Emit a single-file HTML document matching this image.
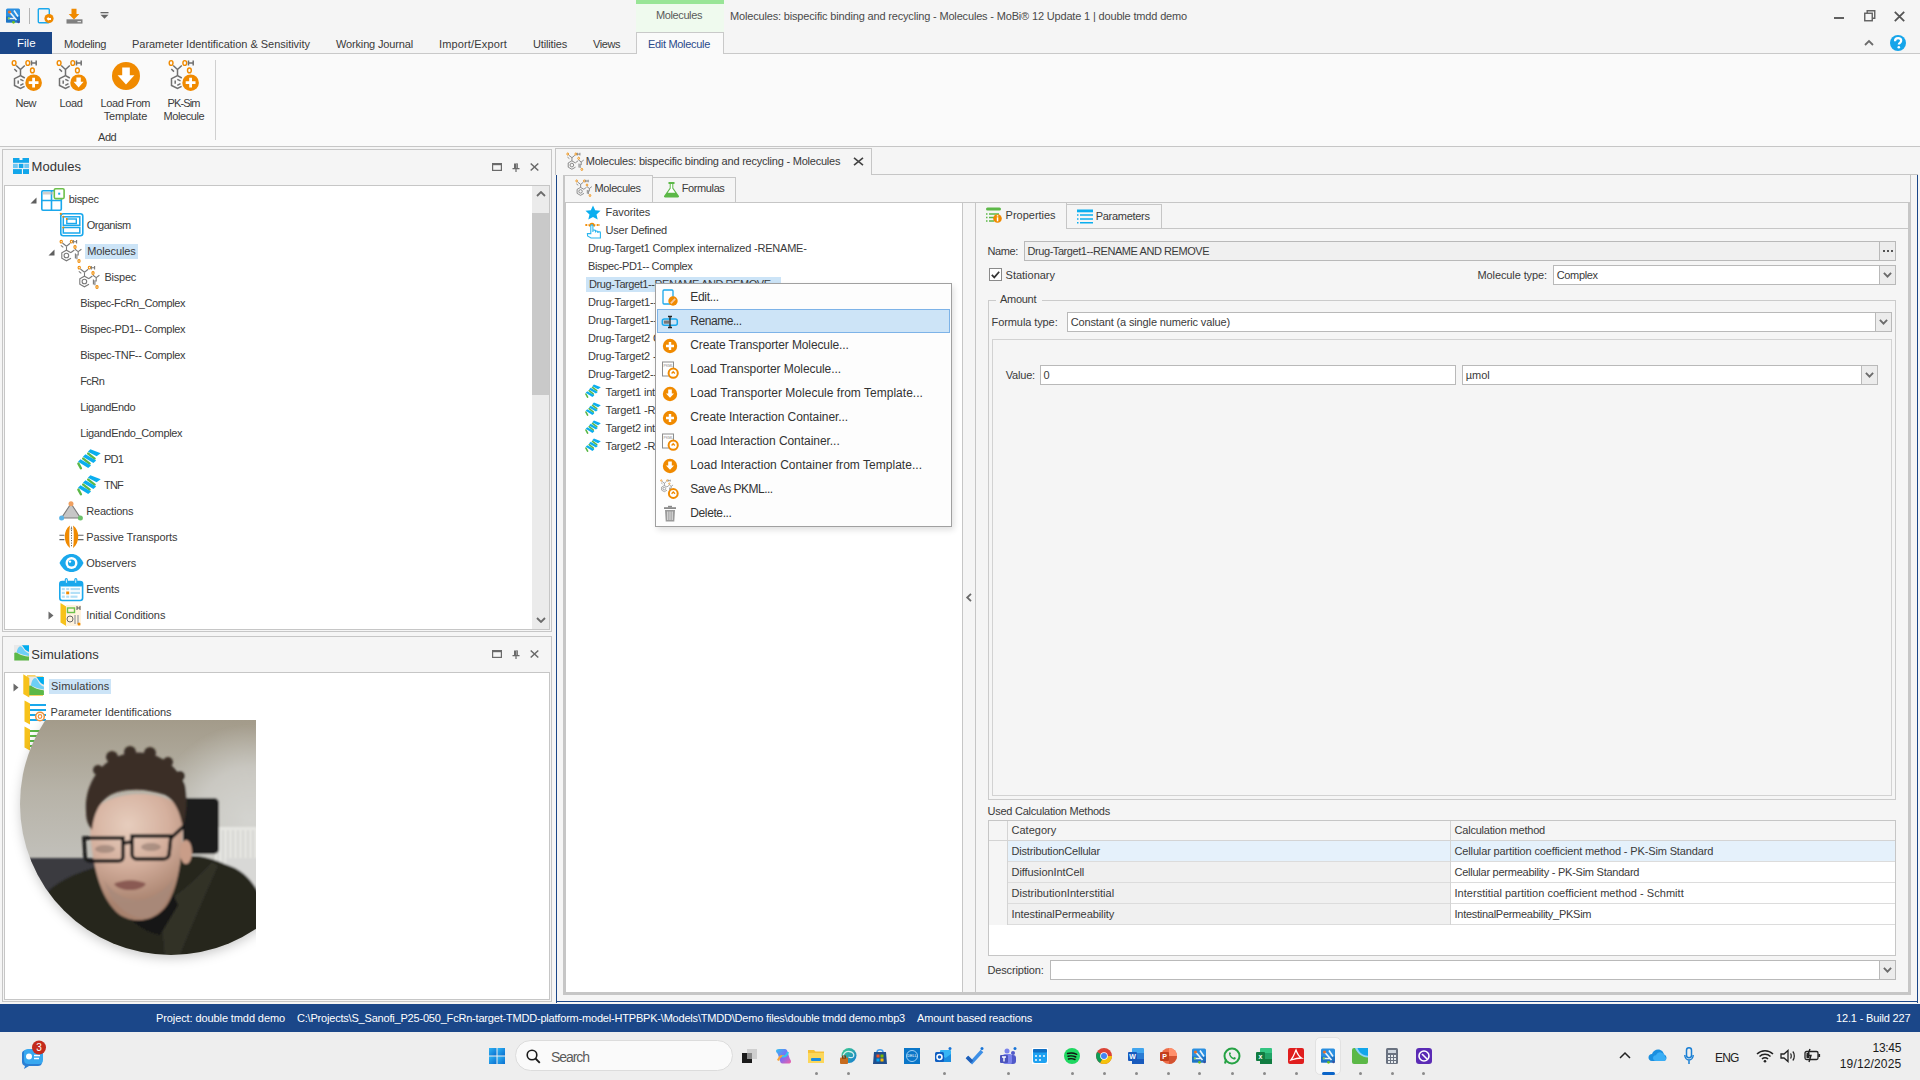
<!DOCTYPE html>
<html><head><meta charset="utf-8">
<style>
*{box-sizing:border-box;margin:0;padding:0}
html,body{width:1920px;height:1080px;overflow:hidden;background:#f5f5f5;font-family:"Liberation Sans",sans-serif;color:#3a3a3a;position:relative}
.a{position:absolute}
.t{position:absolute;white-space:nowrap;line-height:1}
svg{position:absolute;overflow:visible}
</style></head><body>
<svg width="0" height="0" style="position:absolute"><defs>
<symbol id="molbase" viewBox="0 0 40 40">
 <g fill="none" stroke="#f08a00" stroke-width="1.4"><ellipse cx="6.1" cy="7" rx="1.9" ry="2.4"/><ellipse cx="19.8" cy="7" rx="1.9" ry="2.4"/><ellipse cx="24.4" cy="14.4" rx="1.9" ry="2.4"/></g>
 <g fill="none" stroke="#707070" stroke-width="1.5"><path d="M23.5 4.5V9.6M28.2 4.5V9.6M23.5 7H28.2"/><path d="M8.2 9.5L12.5 13.5L16.8 9.5M12.5 13.5V19.5M6.3 13L9 15.6"/><path d="M16.8 22L12.5 19.5L6.5 22.6V29.5L12.5 32.5L16.6 30.3M10.2 24.5V27.8M12.3 23.3L15.5 24.9M12.3 29.3L15.5 27.6"/></g>
</symbol>
<symbol id="molplus" viewBox="0 0 40 40"><use href="#molbase"/><circle cx="25.6" cy="26.7" r="8.3" fill="#f08a00"/><path d="M25.6 21.8V31.6M20.7 26.7H30.5" stroke="#fff" stroke-width="2.8"/></symbol>
<symbol id="moldown" viewBox="0 0 40 40"><use href="#molbase"/><circle cx="25.6" cy="26.7" r="8.3" fill="#f08a00"/><path d="M23.4 21.5H27.8V25.8H30.6L25.6 31.4L20.6 25.8H23.4Z" fill="#fff"/></symbol>
<symbol id="molsmall" viewBox="0 0 24 24">
 <g fill="none" stroke="#f08a00" stroke-width="1.1"><ellipse cx="2.2" cy="2.6" rx="1.1" ry="1.4"/><ellipse cx="12.4" cy="2.6" rx="1.1" ry="1.4"/><ellipse cx="16" cy="8" rx="1.1" ry="1.4"/><ellipse cx="20" cy="22" rx="1.1" ry="1.4"/></g>
 <g fill="none" stroke="#7a7a7a" stroke-width="1.1"><path d="M14.3 1V4.4M17.6 1V4.4M14.3 2.7H17.6"/><path d="M3.4 4L7.5 7.2L11.2 4.2M7.5 7.2V11.2M1.8 6.4L4.3 8.4"/><path d="M12 13.85L7.4 11.2L2.8 13.85V19.15L7.4 21.8L12 19.15"/><circle cx="7.4" cy="16.5" r="2.3"/><path d="M12 13.5L15.4 11M16 10.2L19.2 12.6L22.4 10.2M19.2 12.6V16.5M16.4 14.6V19.6M17.9 15.2V20.2"/></g>
</symbol>
<symbol id="helix" viewBox="0 0 30 30">
 <g stroke="#5cb847" stroke-width="2.4" stroke-linecap="round"><path d="M14.2 9.6L20.6 14.6"/><path d="M9.2 14.6L15.6 19.6"/><path d="M4.4 19.6L6.9 24.3"/></g>
 <g fill="#0aaeef"><path d="M13.9 7.8L16.4 5.3L26.7 9.2L22.6 12.2Z"/><path d="M8.9 12.8L11.5 10.2L22.2 16.4L19.4 18.9Z"/><path d="M4 17.7L6.5 15.2L17.1 21.4L14.2 24Z"/></g>
</symbol>
<symbol id="chev" viewBox="0 0 10 6"><path d="M1 1L5 5L9 1" fill="none" stroke="#6b6b6b" stroke-width="1.8"/></symbol>
</defs></svg>
<div class="a" style="left:0px;top:0px;width:1920px;height:32px;background:#f5f5f5"></div>
<svg style="left:4px;top:7px" width="18" height="18" viewBox="0 0 18 18"><rect x="2" y="1.5" width="14" height="14" rx="1.5" fill="#2b8fe0"/><rect x="2" y="9.5" width="14" height="6" fill="#1f74c4"/><path d="M5.5 5L12.5 13M10 3.5L14 9.5M4 11.5H11" stroke="#fff" stroke-width="1.6" opacity="0.9"/><circle cx="5.5" cy="5" r="1.6" fill="#e8702a"/><circle cx="4.8" cy="11.3" r="1.1" fill="#8dd04a"/><circle cx="9.5" cy="15.3" r="1.4" fill="#6cc020"/><circle cx="14.5" cy="15" r="1.2" fill="#3a4fa0"/></svg>
<div class="a" style="left:29px;top:8px;width:1px;height:16px;background:#b4b4b4"></div>
<svg style="left:37px;top:8px" width="17" height="16" viewBox="0 0 17 16"><rect x="1.3" y="0.8" width="11" height="14" rx="1" fill="none" stroke="#1ba8ec" stroke-width="1.4"/><circle cx="12" cy="10.5" r="4.6" fill="#f08a00"/><path d="M9.6 10.8L11.6 8.8V10H14V12H11.6V13Z" fill="#fff"/></svg>
<svg style="left:66px;top:8px" width="17" height="16" viewBox="0 0 17 16"><path d="M5.5 0.8H10.5V6H13.3L8 11.5L2.7 6H5.5Z" fill="#f08a00"/><rect x="0.5" y="11.3" width="16" height="4.3" fill="#808080"/><rect x="11.5" y="13" width="3.5" height="1.2" fill="#ddd"/></svg>
<svg style="left:100px;top:12px" width="9" height="7" viewBox="0 0 9 7"><rect x="0.5" y="0" width="8" height="1.3" fill="#666"/><path d="M0.5 2.8H8.5L4.5 6.8Z" fill="#666"/></svg>
<div class="a" style="left:636px;top:0px;width:88px;height:32px;background:#effaee"></div>
<div class="a" style="left:636px;top:0px;width:88px;height:4px;background:#99e597"></div>
<div class="t" style="left:656px;top:10px;font-size:11px;letter-spacing:-0.392px;color:#5a5a5a">Molecules</div>
<div class="t" style="left:730px;top:11px;font-size:11px;letter-spacing:-0.166px;color:#4a4a4a">Molecules: bispecific binding and recycling - Molecules - MoBi® 12 Update 1 | double tmdd demo</div>
<div class="a" style="left:1834px;top:17px;width:10px;height:1.5px;background:#606060"></div>
<svg style="left:1864px;top:10px" width="12" height="12" viewBox="0 0 12 12"><rect x="0.75" y="3.25" width="7.5" height="7.5" fill="none" stroke="#606060" stroke-width="1.4"/><path d="M3.2 3.2V0.75H10.75V8.3H8.3" fill="none" stroke="#606060" stroke-width="1.4"/></svg>
<svg style="left:1894px;top:11px" width="11" height="11" viewBox="0 0 11 11"><path d="M0.8 0.8L10.2 10.2M10.2 0.8L0.8 10.2" stroke="#555" stroke-width="1.8"/></svg>
<div class="a" style="left:0px;top:53px;width:1920px;height:1px;background:#c9c9c9"></div>
<div class="a" style="left:0px;top:32px;width:52px;height:22px;background:#1b4789"></div>
<div class="t" style="left:17px;top:38px;font-size:11.5px;letter-spacing:0px;color:#ffffff">File</div>
<div class="t" style="left:64px;top:39px;font-size:11px;letter-spacing:-0.33px">Modeling</div>
<div class="t" style="left:132px;top:39px;font-size:11px;letter-spacing:-0.03px">Parameter Identification &amp; Sensitivity</div>
<div class="t" style="left:336px;top:39px;font-size:11px;letter-spacing:-0.152px">Working Journal</div>
<div class="t" style="left:439px;top:39px;font-size:11px;letter-spacing:0.151px">Import/Export</div>
<div class="t" style="left:533px;top:39px;font-size:11px;letter-spacing:-0.161px">Utilities</div>
<div class="t" style="left:593px;top:39px;font-size:11px;letter-spacing:-0.431px">Views</div>
<div class="a" style="left:636px;top:32px;width:88px;height:22px;background:#fafafa;border:1px solid #c9c9c9;border-bottom:none"></div>
<div class="t" style="left:648px;top:39px;font-size:11px;letter-spacing:-0.311px;color:#2b4a8b">Edit Molecule</div>
<svg style="left:1864px;top:39px" width="10" height="7" viewBox="0 0 10 7"><path d="M1 6L5 2L9 6" fill="none" stroke="#6b6b6b" stroke-width="1.8"/></svg>
<svg style="left:1889px;top:34px" width="18" height="18" viewBox="0 0 18 18"><circle cx="9" cy="9" r="8" fill="#16a5ea"/><path d="M6 7.2C6 5.2 7.4 4.2 9.1 4.2C10.9 4.2 12.2 5.3 12.2 6.8C12.2 8.7 9.8 8.9 9.8 10.6" fill="none" stroke="#fff" stroke-width="2.2"/><circle cx="9.8" cy="13.3" r="1.3" fill="#fff"/></svg>
<div class="a" style="left:0px;top:54px;width:1920px;height:92px;background:#fafafa"></div>
<div class="a" style="left:0px;top:146px;width:1920px;height:1px;background:#c6c6c6"></div>
<svg style="left:8px;top:56px" width="40" height="40" viewBox="0 0 40 40"><use href="#molplus"/></svg>
<svg style="left:53px;top:56px" width="40" height="40" viewBox="0 0 40 40"><use href="#moldown"/></svg>
<svg style="left:111px;top:61px" width="30" height="30" viewBox="0 0 30 30"><circle cx="15" cy="15" r="14" fill="#f08a00"/><path d="M11.2 6.5H18.8V14.3H23.4L15 23.5L6.6 14.3H11.2Z" fill="#fff"/></svg>
<svg style="left:165px;top:56px" width="40" height="40" viewBox="0 0 40 40"><use href="#molplus"/></svg>
<div class="t" style="left:15.5px;top:98px;font-size:11px;letter-spacing:-0.505px">New</div>
<div class="t" style="left:59.4px;top:98px;font-size:11px;letter-spacing:-0.371px">Load</div>
<div class="t" style="left:100.6px;top:98px;font-size:11px;letter-spacing:-0.411px">Load From</div>
<div class="t" style="left:103.7px;top:111px;font-size:11px;letter-spacing:-0.143px">Template</div>
<div class="t" style="left:167.5px;top:98px;font-size:11px;letter-spacing:-0.88px">PK-Sim</div>
<div class="t" style="left:163.6px;top:111px;font-size:11px;letter-spacing:-0.429px">Molecule</div>
<div class="t" style="left:98px;top:132px;font-size:11px;letter-spacing:-0.426px">Add</div>
<div class="a" style="left:215px;top:60px;width:1px;height:80px;background:#d0d0d0"></div>
<div class="a" style="left:2px;top:149px;width:550px;height:483px;background:#f5f5f5;border:1px solid #c6c6c6"></div>
<svg style="left:13px;top:158px" width="17" height="16" viewBox="0 0 17 16"><rect x="0" y="0" width="16" height="4.8" fill="#12a6ea"/><rect x="6.5" y="0" width="3" height="2" fill="#f5f5f5"/><rect x="0" y="5.8" width="4.8" height="4.3" fill="#6fc7f3"/><rect x="5.8" y="5.8" width="4.6" height="4.3" fill="#12a6ea"/><rect x="11.3" y="5.8" width="4.7" height="4.3" fill="#6fc7f3"/><rect x="0" y="11.1" width="8.9" height="4.9" fill="#12a6ea"/><rect x="10" y="11.1" width="6" height="4.9" fill="#12a6ea"/></svg>
<div class="t" style="left:31.6px;top:160px;font-size:13px;letter-spacing:0.037px;color:#333">Modules</div>
<svg style="left:492px;top:163px" width="10" height="8" viewBox="0 0 10 8"><rect x="0.6" y="0.6" width="8.8" height="6.8" fill="none" stroke="#6a6a6a" stroke-width="1.2"/><rect x="0" y="0" width="10" height="2.2" fill="#6a6a6a"/></svg>
<svg style="left:512px;top:163px" width="8" height="9" viewBox="0 0 8 9"><path d="M2 0.5H6V5H7.5V6.2H4.6V9H3.4V6.2H0.5V5H2Z" fill="#6a6a6a"/><rect x="4" y="0.5" width="1.4" height="4.5" fill="#9a9a9a"/></svg>
<svg style="left:530px;top:163px" width="9" height="8" viewBox="0 0 9 8"><path d="M0.7 0.5L8.3 7.5M8.3 0.5L0.7 7.5" stroke="#6a6a6a" stroke-width="1.5"/></svg>
<div class="a" style="left:4px;top:185px;width:546px;height:445px;background:#ffffff;border:1px solid #c6c6c6"></div>
<div class="a" style="left:532px;top:186px;width:17px;height:443px;background:#ebebeb"></div>
<div class="a" style="left:532px;top:213px;width:17px;height:182px;background:#c9c9c9"></div>
<svg style="left:536px;top:191px" width="10" height="6" viewBox="0 0 10 6"><use href="#chev" transform="rotate(180 5 3)"/></svg>
<svg style="left:536px;top:617px" width="10" height="6" viewBox="0 0 10 6"><use href="#chev"/></svg>
<svg style="left:30px;top:197px" width="7" height="7" viewBox="0 0 7 7"><path d="M6.5 0.5V6.5H0.5Z" fill="#5f5f5f"/></svg>
<svg style="left:41px;top:188px" width="24" height="23" viewBox="0 0 24 23"><rect x="0.8" y="2.8" width="19.5" height="19.5" rx="1.2" fill="none" stroke="#1aa8ec" stroke-width="1.6"/><path d="M10.5 3V22M1 12.5H20" stroke="#1aa8ec" stroke-width="1.6"/><rect x="13.3" y="0.8" width="9.8" height="9.8" rx="1.3" fill="#fff" stroke="#6cc04a" stroke-width="1.6"/><rect x="17.2" y="4.7" width="2" height="2" fill="#1aa8ec"/><rect x="2" y="4" width="10" height="2.5" fill="#bbb" opacity="0.7"/></svg>
<div class="t" style="left:68.7px;top:194px;font-size:11px;letter-spacing:-0.299px">bispec</div>
<svg style="left:60px;top:213px" width="24" height="24" viewBox="0 0 24 24"><rect x="0.8" y="0.8" width="22" height="22" rx="2.5" fill="none" stroke="#1aa8ec" stroke-width="1.6"/><rect x="3.3" y="3.8" width="16.5" height="8.5" fill="none" stroke="#1aa8ec" stroke-width="1.5"/><rect x="6.8" y="6" width="9.5" height="4.5" fill="none" stroke="#1aa8ec" stroke-width="1.4"/><rect x="3.3" y="14.5" width="16.5" height="5.5" fill="none" stroke="#1aa8ec" stroke-width="1.5"/><circle cx="0.8" cy="0.8" r="1.1" fill="#f08a00"/><circle cx="3.3" cy="3.8" r="1" fill="#f08a00"/><circle cx="6.8" cy="6" r="1" fill="#f08a00"/><circle cx="3.3" cy="14.5" r="1" fill="#f08a00"/></svg>
<div class="t" style="left:86.7px;top:220px;font-size:11px;letter-spacing:-0.461px">Organism</div>
<svg style="left:48px;top:249px" width="7" height="7" viewBox="0 0 7 7"><path d="M6.5 0.5V6.5H0.5Z" fill="#5f5f5f"/></svg>
<svg style="left:59px;top:239px" width="24" height="24" viewBox="0 0 24 24"><use href="#molsmall"/></svg>
<div class="a" style="left:85px;top:244px;width:53px;height:15px;background:#cce4f7"></div>
<div class="t" style="left:87.2px;top:246px;font-size:11px;letter-spacing:-0.115px">Molecules</div>
<svg style="left:77px;top:265px" width="24" height="24" viewBox="0 0 24 24"><use href="#molsmall"/></svg>
<div class="t" style="left:104.5px;top:272px;font-size:11px;letter-spacing:-0.255px">Bispec</div>
<div class="t" style="left:80.2px;top:298px;font-size:11px;letter-spacing:-0.394px">Bispec-FcRn_Complex</div>
<div class="t" style="left:80.2px;top:324px;font-size:11px;letter-spacing:-0.344px">Bispec-PD1-- Complex</div>
<div class="t" style="left:80.2px;top:350px;font-size:11px;letter-spacing:-0.343px">Bispec-TNF-- Complex</div>
<div class="t" style="left:80.2px;top:376px;font-size:11px;letter-spacing:-0.57px">FcRn</div>
<div class="t" style="left:80.2px;top:402px;font-size:11px;letter-spacing:-0.373px">LigandEndo</div>
<div class="t" style="left:80.2px;top:428px;font-size:11px;letter-spacing:-0.347px">LigandEndo_Complex</div>
<svg style="left:74px;top:444px" width="30" height="30" viewBox="0 0 30 30"><use href="#helix"/></svg>
<div class="t" style="left:104px;top:454px;font-size:11px;letter-spacing:-0.802px">PD1</div>
<svg style="left:74px;top:470px" width="30" height="30" viewBox="0 0 30 30"><use href="#helix"/></svg>
<div class="t" style="left:104px;top:480px;font-size:11px;letter-spacing:-0.797px">TNF</div>
<svg style="left:59px;top:501px" width="24" height="20" viewBox="0 0 24 20"><path d="M12 2.5L21.5 17H2.5Z" fill="#c6c6c6" stroke="#7a7a7a" stroke-width="1.1"/><circle cx="12" cy="2.8" r="2.5" fill="#f0a060"/><circle cx="2.6" cy="17" r="2.5" fill="#5ab4e8"/><circle cx="21.4" cy="17" r="2.5" fill="#6cc06a"/></svg>
<div class="t" style="left:86.3px;top:506px;font-size:11px;letter-spacing:-0.214px">Reactions</div>
<svg style="left:59px;top:524px" width="25" height="25" viewBox="0 0 25 25"><path d="M11 1.5C4 6 4 19 11 24C10 18 10 7 11 1.5Z" fill="#f08a00"/><path d="M14 1.5C21 6 21 19 14 24C15 18 15 7 14 1.5Z" fill="#f08a00"/><path d="M12.5 6V23.5" stroke="#555" stroke-width="0.9" stroke-dasharray="1.2 1.3"/><path d="M11.6 5.5L12.5 1.8L13.4 5.5Z" fill="#777"/><path d="M0.4 11.2H5.4M0.4 15.6H5.4M19 11.2H24.5M19 15.6H24.5" stroke="#666" stroke-width="1.1"/></svg>
<div class="t" style="left:86.3px;top:532px;font-size:11px;letter-spacing:-0.141px">Passive Transports</div>
<svg style="left:59px;top:553px" width="25" height="20" viewBox="0 0 25 20"><path d="M0.5 10C4 3 8 1 12.5 1S21 3 24.5 10C21 17 17 19 12.5 19S4 17 0.5 10Z" fill="#1aa8ec"/><circle cx="12.5" cy="10" r="6" fill="#fff"/><circle cx="12.5" cy="10" r="3.6" fill="#1aa8ec"/><circle cx="11" cy="8.6" r="1.2" fill="#fff"/></svg>
<div class="t" style="left:86.3px;top:558px;font-size:11px;letter-spacing:-0.083px">Observers</div>
<svg style="left:59px;top:578px" width="25" height="24" viewBox="0 0 25 24"><rect x="0.8" y="3.5" width="22.8" height="19" rx="2.5" fill="#fff" stroke="#1aa8ec" stroke-width="1.6"/><rect x="0.8" y="3.5" width="22.8" height="5" rx="1.5" fill="#1aa8ec"/><rect x="6.3" y="0.6" width="2" height="5" rx="1" fill="#fff" stroke="#1aa8ec" stroke-width="1.1"/><rect x="15.8" y="0.6" width="2" height="5" rx="1" fill="#fff" stroke="#1aa8ec" stroke-width="1.1"/><g fill="#b3e0f7"><rect x="2.8" y="10" width="3" height="2.2"/><rect x="7.2" y="10" width="3" height="2.2"/><rect x="11.5" y="10" width="9.5" height="2.2"/><rect x="2.8" y="13.8" width="3" height="2.2"/><rect x="11.5" y="13.8" width="9.5" height="2.2"/><rect x="2.8" y="17.6" width="3" height="2.2"/><rect x="7.2" y="17.6" width="3" height="2.2"/><rect x="11.5" y="17.6" width="7" height="2.2"/></g><rect x="7.2" y="13.5" width="3" height="2.8" fill="#f08a00"/></svg>
<div class="t" style="left:86.3px;top:584px;font-size:11px;letter-spacing:-0.107px">Events</div>
<svg style="left:48px;top:611px" width="6" height="9" viewBox="0 0 6 9"><path d="M0.5 0.5L5.5 4.5L0.5 8.5Z" fill="#6a6a6a"/></svg>
<svg style="left:60px;top:602px" width="22" height="25" viewBox="0 0 22 25"><path d="M0.5 1L7 5V24.5L0.5 20.5Z" fill="#f7c21b"/><rect x="6" y="3" width="15" height="21" fill="#fff3de"/><rect x="7.5" y="6" width="7" height="4.5" fill="none" stroke="#6cc04a" stroke-width="1.4"/><circle cx="10" cy="17" r="3" fill="none" stroke="#666" stroke-width="1"/><path d="M15 13V22M18 13V22" stroke="#aaa" stroke-width="1.5"/><circle cx="19" cy="22" r="1.5" fill="#f08a00"/><path d="M17 4V8M20 4V8M17 6H20" stroke="#555" stroke-width="1"/></svg>
<div class="t" style="left:86.3px;top:610px;font-size:11px;letter-spacing:-0.095px">Initial Conditions</div>
<div class="a" style="left:2px;top:636px;width:550px;height:366px;background:#f5f5f5;border:1px solid #c6c6c6"></div>
<svg style="left:13.7px;top:645.3px" width="15" height="16" viewBox="0 0 15 16"><rect x="0" y="0" width="15" height="15.5" fill="#e9e9e9"/><path d="M0.3 15.5V8C2 6.2 4 8.8 8 10.3C10.5 11.1 13 11.4 15 11.6V15.5Z" fill="#5cb847"/><path d="M2.6 7.6C3 4 4.5 1.5 6.5 1.2C8 1.2 9 3.5 10.5 5.5C12 7 13.5 8 15 8.4V10.9C12 10.5 8 9.8 5.5 8.6C4.5 8.2 3.5 8 2.6 7.6Z" fill="#6dcff6"/><path d="M7.6 0.2H15V6.9C13 6.3 11.5 5.2 10.3 3.5C9.5 2.2 8.8 0.8 7.6 0.2Z" fill="#00adef"/></svg>
<div class="t" style="left:31.3px;top:648px;font-size:13px;letter-spacing:0.036px;color:#333">Simulations</div>
<svg style="left:492px;top:650px" width="10" height="8" viewBox="0 0 10 8"><rect x="0.6" y="0.6" width="8.8" height="6.8" fill="none" stroke="#6a6a6a" stroke-width="1.2"/><rect x="0" y="0" width="10" height="2.2" fill="#6a6a6a"/></svg>
<svg style="left:512px;top:650px" width="8" height="9" viewBox="0 0 8 9"><path d="M2 0.5H6V5H7.5V6.2H4.6V9H3.4V6.2H0.5V5H2Z" fill="#6a6a6a"/><rect x="4" y="0.5" width="1.4" height="4.5" fill="#9a9a9a"/></svg>
<svg style="left:530px;top:650px" width="9" height="8" viewBox="0 0 9 8"><path d="M0.7 0.5L8.3 7.5M8.3 0.5L0.7 7.5" stroke="#6a6a6a" stroke-width="1.5"/></svg>
<div class="a" style="left:4px;top:672px;width:546px;height:328px;background:#ffffff;border:1px solid #c6c6c6"></div>
<svg style="left:12.5px;top:683px" width="6" height="9" viewBox="0 0 6 9"><path d="M0.5 0.5L5.5 4.5L0.5 8.5Z" fill="#6a6a6a"/></svg>
<svg style="left:23px;top:674px" width="22" height="24" viewBox="0 0 22 24"><path d="M4 1H12L13 2H20V22H4Z" fill="#f7d36b"/><g transform="translate(5.3,2.7) scale(1.04,1.18)"><rect x="0" y="0" width="15" height="15.5" fill="#e9e9e9"/><path d="M0.3 15.5V8C2 6.2 4 8.8 8 10.3C10.5 11.1 13 11.4 15 11.6V15.5Z" fill="#5cb847"/><path d="M2.6 7.6C3 4 4.5 1.5 6.5 1.2C8 1.2 9 3.5 10.5 5.5C12 7 13.5 8 15 8.4V10.9C12 10.5 8 9.8 5.5 8.6C4.5 8.2 3.5 8 2.6 7.6Z" fill="#6dcff6"/><path d="M7.6 0.2H15V6.9C13 6.3 11.5 5.2 10.3 3.5C9.5 2.2 8.8 0.8 7.6 0.2Z" fill="#00adef"/></g><path d="M0.3 0.3L6.3 4V23.5L0.3 20Z" fill="#f7c21b"/></svg>
<div class="a" style="left:49px;top:679px;width:62px;height:15px;background:#cce4f7"></div>
<div class="t" style="left:51.1px;top:681px;font-size:11px;letter-spacing:0.131px">Simulations</div>
<svg style="left:24px;top:700px" width="22" height="25" viewBox="0 0 22 25"><path d="M5 2H21V23H5Z" fill="#fff"/><path d="M6 5H22M6 10H22M6 15H22M6 20H22" stroke="#1aa8ec" stroke-width="2.2"/><path d="M0.5 0.5L6 3.5V24.5L0.5 21.5Z" fill="#f7c21b"/><circle cx="16" cy="16.5" r="4.3" fill="#fff" stroke="#f0913a" stroke-width="1.5"/><circle cx="16" cy="16.5" r="1.8" fill="none" stroke="#f0913a" stroke-width="1.2"/></svg>
<div class="t" style="left:50.6px;top:707px;font-size:11px;letter-spacing:-0.027px">Parameter Identifications</div>
<svg style="left:24px;top:726px" width="22" height="25" viewBox="0 0 22 25"><path d="M5 2H21V23H5Z" fill="#fff"/><path d="M6 5H22M6 10H22M6 15H22M6 20H22" stroke="#5cb847" stroke-width="2.2"/><path d="M0.5 0.5L6 3.5V24.5L0.5 21.5Z" fill="#f7c21b"/></svg>
<svg style="left:0px;top:700px" width="280" height="300" viewBox="0 700 280 300">
<defs>
 <clipPath id="wcR"><rect x="0" y="720" width="256" height="280"/></clipPath>
 <clipPath id="wcC"><circle cx="171" cy="804" r="151"/></clipPath>
 <filter id="wcB" x="-20%" y="-20%" width="140%" height="140%"><feGaussianBlur stdDeviation="1.1"/></filter>
 <filter id="wcS" x="-30%" y="-30%" width="160%" height="160%"><feGaussianBlur stdDeviation="6"/></filter>
 <linearGradient id="wcBg" x1="0" y1="720" x2="0" y2="900" gradientUnits="userSpaceOnUse"><stop offset="0" stop-color="#a39b8a"/><stop offset="0.4" stop-color="#b7b3a8"/><stop offset="1" stop-color="#c8c8c5"/></linearGradient>
 <radialGradient id="wcR2" cx="250" cy="820" r="95" gradientUnits="userSpaceOnUse"><stop offset="0" stop-color="#d4d4d0"/><stop offset="0.55" stop-color="#cfcec9" stop-opacity="0.8"/><stop offset="1" stop-color="#c8c6bf" stop-opacity="0"/></radialGradient>
 <radialGradient id="wcFace" cx="128" cy="825" r="80" gradientUnits="userSpaceOnUse"><stop offset="0" stop-color="#e6cdbd"/><stop offset="0.5" stop-color="#d5b09e"/><stop offset="1" stop-color="#a8826e"/></radialGradient>
</defs>
<g clip-path="url(#wcR)">
 <circle cx="171" cy="808" r="150" fill="rgba(0,0,0,0.22)" filter="url(#wcS)"/>
 <g clip-path="url(#wcC)">
  <rect x="0" y="720" width="280" height="260" fill="url(#wcBg)"/>
  <g filter="url(#wcB)">
   <rect x="130" y="720" width="140" height="180" fill="url(#wcR2)"/>
   <rect x="215" y="827" width="45" height="48" fill="#e6e6e2"/>
   <path d="M218 830V872M223 830V872M228 830V872M233 830V872M238 830V872M243 830V872M248 830V872M253 830V872" stroke="#c4c4c0" stroke-width="1"/>
   <rect x="226" y="858" width="34" height="40" fill="#d8d8d6"/>
   <rect x="183" y="798" width="36" height="56" rx="5" fill="#1c1c1c"/>
   <path d="M25 858H105V910H40Z" fill="#3a3b40"/>
   <path d="M40 900C55 880 80 872 100 866L140 880L178 858C200 852 215 860 235 868C250 876 258 890 262 900V1000H40Z" fill="#27271f"/>
   <path d="M160 905C180 895 200 875 212 862L218 866C205 895 190 930 178 960L165 960Z" fill="#3a3a30" opacity="0.5"/>
   <path d="M98 868C112 905 135 930 160 935L178 905C170 890 167 870 170 850Z" fill="#161614"/>
   <path d="M90 815C90 862 100 900 120 915C135 924 155 922 167 905C180 885 184 845 182 812C175 790 110 785 90 815Z" fill="url(#wcFace)"/>
   <path d="M104 880C112 905 128 918 145 918C160 916 170 900 174 878C165 890 150 902 135 900C120 898 110 890 104 880Z" fill="#a8897a" opacity="0.8"/>
   <path d="M86 812C84 785 100 760 125 754C150 748 175 760 185 785C188 800 186 815 183 828C180 812 175 800 165 795C150 790 135 788 118 792C105 796 95 805 92 830C88 825 86 820 86 812Z" fill="#3b2f27"/>
   <g fill="#3b2f27"><circle cx="98" cy="770" r="5"/><circle cx="112" cy="757" r="6"/><circle cx="130" cy="752" r="6"/><circle cx="150" cy="753" r="6"/><circle cx="168" cy="762" r="5"/><circle cx="180" cy="776" r="5"/></g>
   <ellipse cx="186" cy="852" rx="6" ry="12" fill="#c99d88"/>
   <path d="M114 884C124 879 137 879 146 884C140 892 120 892 114 884Z" fill="#8a5a52"/>
   <g fill="none" stroke="#141414" stroke-width="3.4"><path d="M84 838H123V857C123 860 121 861 118 861H90C87 861 85 859 85 856Z"/><path d="M132 836H171L169 855C168 858 166 859 163 859H137C134 859 132 857 132 854Z"/><path d="M123 843L132 842M171 838L184 826"/></g>
   <ellipse cx="105" cy="849" rx="10" ry="4" fill="#5a4a44" opacity="0.35"/>
   <ellipse cx="151" cy="847" rx="10" ry="4" fill="#5a4a44" opacity="0.35"/>
  </g>
 </g>
</g>
</svg>
<div class="a" style="left:555px;top:148px;width:317px;height:27px;background:#f5f5f5;border:1px solid #c6c6c6;border-bottom:none"></div>
<svg style="left:566px;top:152px" width="19" height="19" viewBox="0 0 24 24"><use href="#molsmall"/></svg>
<div class="t" style="left:585.7px;top:156px;font-size:11px;letter-spacing:-0.218px">Molecules: bispecific binding and recycling - Molecules</div>
<svg style="left:853px;top:157px" width="11" height="9" viewBox="0 0 11 9"><path d="M1 0.8L10 8.2M10 0.8L1 8.2" stroke="#444" stroke-width="1.6"/></svg>
<div class="a" style="left:871px;top:174px;width:1047px;height:1px;background:#c6c6c6"></div>
<div class="a" style="left:556px;top:175px;width:1px;height:828px;background:#1b4789"></div>
<div class="a" style="left:1917px;top:175px;width:1px;height:828px;background:#1b4789"></div>
<div class="a" style="left:1910px;top:175px;width:1px;height:27px;background:#c6c6c6"></div>
<div class="a" style="left:556px;top:1001px;width:1362px;height:1.4px;background:#1b4789"></div>
<div class="a" style="left:563px;top:175px;width:90px;height:28px;background:#f5f5f5;border:1px solid #c6c6c6;border-bottom:none;border-left:2px solid #c6c6c6"></div>
<svg style="left:575px;top:179px" width="18" height="18" viewBox="0 0 24 24"><use href="#molsmall"/></svg>
<div class="t" style="left:594.6px;top:183px;font-size:11px;letter-spacing:-0.392px">Molecules</div>
<div class="a" style="left:652px;top:177px;width:84px;height:26px;background:#f5f5f5;border:1px solid #c6c6c6;border-bottom:none"></div>
<svg style="left:663px;top:181px" width="17" height="17" viewBox="0 0 17 17"><path d="M5.5 1H11.5V3H10.3V7L15.8 14.8C16.4 15.8 15.8 16.5 14.8 16.5H2.2C1.2 16.5 0.6 15.8 1.2 14.8L6.7 7V3H5.5Z" fill="#5cb847"/><path d="M7.7 3V7.4L4.7 11.7H12.3L9.3 7.4V3Z" fill="#fff"/></svg>
<div class="t" style="left:681.7px;top:183px;font-size:11px;letter-spacing:-0.38px">Formulas</div>
<div class="a" style="left:736px;top:202px;width:1175px;height:1px;background:#c6c6c6"></div>
<div class="a" style="left:563px;top:202px;width:1348px;height:1px;background:#c6c6c6"></div>
<div class="a" style="left:563px;top:202px;width:3px;height:793px;background:#c6c6c6"></div>
<div class="a" style="left:563px;top:992px;width:1348px;height:3px;background:#c6c6c6"></div>
<div class="a" style="left:1908px;top:202px;width:3px;height:793px;background:#c6c6c6"></div>
<div class="a" style="left:566px;top:203px;width:396px;height:789px;background:#ffffff"></div>
<div class="a" style="left:962px;top:203px;width:1px;height:789px;background:#c6c6c6"></div>
<svg style="left:966px;top:593px" width="6" height="9" viewBox="0 0 6 9"><path d="M5 0.8L1.2 4.5L5 8.2" fill="none" stroke="#6a6a6a" stroke-width="1.8"/></svg>
<div class="a" style="left:975px;top:203px;width:1px;height:789px;background:#c6c6c6"></div>
<svg style="left:585px;top:205px" width="16" height="15" viewBox="0 0 16 15"><path d="M8 0.5L10.2 5.3L15.5 5.8L11.5 9.4L12.7 14.6L8 11.9L3.3 14.6L4.5 9.4L0.5 5.8L5.8 5.3Z" fill="#0aaeef"/></svg>
<div class="t" style="left:605.6px;top:207px;font-size:11px;letter-spacing:-0.072px">Favorites</div>
<svg style="left:585px;top:221px" width="17" height="18" viewBox="0 0 17 18"><path d="M0.6 4H16" stroke="#f08a00" stroke-width="0.9" stroke-dasharray="1.2 1"/><circle cx="1.3" cy="4" r="1.1" fill="#f08a00"/><circle cx="12.8" cy="4" r="1.1" fill="#f08a00"/><path d="M4.8 5.4C4.8 1.8 9.2 1.8 9.2 5.4" fill="none" stroke="#f08a00" stroke-width="1.8"/><path d="M5.8 12.6V4.8C5.8 3.6 7.9 3.6 7.9 4.8V11V8.6L10.5 9.4V11.6V9.8L12.8 10.5V12V10.6C13.5 10.6 15.4 11 15.4 11.5V17H6L2.6 15L2.4 12.6Z" fill="#fff" stroke="#2bb5ee" stroke-width="1.1"/></svg>
<div class="t" style="left:605.6px;top:225px;font-size:11px;letter-spacing:-0.234px">User Defined</div>
<div class="t" style="left:588px;top:243px;font-size:11px;letter-spacing:-0.208px">Drug-Target1 Complex internalized -RENAME-</div>
<div class="t" style="left:588px;top:261px;font-size:11px;letter-spacing:-0.374px">Bispec-PD1-- Complex</div>
<div class="a" style="left:586px;top:277px;width:195px;height:15px;background:#cce4f7"></div>
<div class="t" style="left:589px;top:279px;font-size:11px;letter-spacing:-0.429px">Drug-Target1--RENAME AND REMOVE</div>
<div class="t" style="left:588px;top:297px;font-size:11px;letter-spacing:-0.18px">Drug-Target1-- Complex internalized</div>
<div class="t" style="left:588px;top:315px;font-size:11px;letter-spacing:-0.18px">Drug-Target1-- Complex</div>
<div class="t" style="left:588px;top:333px;font-size:11px;letter-spacing:-0.18px">Drug-Target2 Complex internalized</div>
<div class="t" style="left:588px;top:351px;font-size:11px;letter-spacing:-0.18px">Drug-Target2 -- Complex</div>
<div class="t" style="left:588px;top:369px;font-size:11px;letter-spacing:-0.18px">Drug-Target2--RENAME AND REMOVE</div>
<svg style="left:583px;top:381px" width="20" height="20" viewBox="0 0 30 30"><use href="#helix"/></svg>
<div class="t" style="left:605.6px;top:387px;font-size:11px;letter-spacing:-0.18px">Target1 internalized</div>
<svg style="left:583px;top:399px" width="20" height="20" viewBox="0 0 30 30"><use href="#helix"/></svg>
<div class="t" style="left:605.6px;top:405px;font-size:11px;letter-spacing:-0.18px">Target1 -RENAME-</div>
<svg style="left:583px;top:417px" width="20" height="20" viewBox="0 0 30 30"><use href="#helix"/></svg>
<div class="t" style="left:605.6px;top:423px;font-size:11px;letter-spacing:-0.18px">Target2  internalized</div>
<svg style="left:583px;top:435px" width="20" height="20" viewBox="0 0 30 30"><use href="#helix"/></svg>
<div class="t" style="left:605.6px;top:441px;font-size:11px;letter-spacing:-0.18px">Target2 -RENAME-</div>
<div class="a" style="left:976px;top:203px;width:932px;height:789px;background:#f5f5f5"></div>
<div class="a" style="left:1066px;top:202px;width:1px;height:27px;background:#c6c6c6"></div>
<svg style="left:986px;top:207px" width="16" height="16" viewBox="0 0 16 16"><rect x="0" y="0.5" width="15" height="3" rx="1.5" fill="#5cb847"/><path d="M0 7H1.5M3 7H13M0 10.5H1.5M3 10.5H9M0 14H1.5M3 14H8" stroke="#5cb847" stroke-width="1.6"/><circle cx="11.5" cy="11.5" r="4.3" fill="#f08a00"/><rect x="10.8" y="10.3" width="1.5" height="4" fill="#fff"/><rect x="10.8" y="8.2" width="1.5" height="1.3" fill="#fff"/></svg>
<div class="t" style="left:1005.6px;top:210px;font-size:11px;letter-spacing:-0.014px">Properties</div>
<div class="a" style="left:1066px;top:204px;width:96px;height:25px;background:#f5f5f5;border:1px solid #c6c6c6;border-bottom:none"></div>
<svg style="left:1077px;top:209px" width="17" height="15" viewBox="0 0 17 15"><rect x="0" y="0.5" width="16" height="2.8" fill="#0aaeef"/><path d="M0 6H1.5M3 6H16M0 10H1.5M3 10H16M0 13.8H1.5M3 13.8H16" stroke="#0aaeef" stroke-width="1.4"/></svg>
<div class="t" style="left:1095.7px;top:211px;font-size:11px;letter-spacing:-0.286px">Parameters</div>
<div class="a" style="left:1161px;top:228px;width:747px;height:1px;background:#c6c6c6"></div>
<div class="a" style="left:1066px;top:228px;width:96px;height:1px;background:#c6c6c6"></div>
<div class="t" style="left:987.5px;top:246px;font-size:11px;letter-spacing:-0.381px">Name:</div>
<div class="a" style="left:1024px;top:241px;width:872px;height:20px;background:#f0f0f0;border:1px solid #b9b9b9"></div>
<div class="a" style="left:1879px;top:241px;width:17px;height:20px;background:#ececec;border:1px solid #b9b9b9"></div>
<svg style="left:1882.5px;top:250.0px" width="10" height="2" viewBox="0 0 10 2"><rect x="0" y="0" width="2" height="2" fill="#555"/><rect x="4" y="0" width="2" height="2" fill="#555"/><rect x="8" y="0" width="2" height="2" fill="#555"/></svg>
<div class="t" style="left:1027.5px;top:246px;font-size:11px;letter-spacing:-0.429px">Drug-Target1--RENAME AND REMOVE</div>
<div class="a" style="left:989px;top:268px;width:13px;height:13px;background:#fff;border:1px solid #8a8a8a"></div>
<svg style="left:991px;top:271px" width="9" height="8" viewBox="0 0 9 8"><path d="M0.8 3.8L3.3 6.4L8.2 0.8" fill="none" stroke="#333" stroke-width="1.7"/></svg>
<div class="t" style="left:1005.6px;top:270px;font-size:11px;letter-spacing:-0.013px">Stationary</div>
<div class="t" style="left:1477.5px;top:270px;font-size:11px;letter-spacing:-0.103px">Molecule type:</div>
<div class="a" style="left:1553px;top:265px;width:343px;height:20px;background:#ffffff;border:1px solid #b9b9b9"></div>
<div class="a" style="left:1879px;top:265px;width:17px;height:20px;background:#ececec;border:1px solid #b9b9b9"></div>
<svg style="left:1883.0px;top:272.0px" width="9" height="6" viewBox="0 0 9 6"><path d="M0.9 0.9L4.5 4.6L8.1 0.9" fill="none" stroke="#6b6b6b" stroke-width="1.9"/></svg>
<div class="t" style="left:1556.7px;top:270px;font-size:11px;letter-spacing:-0.344px">Complex</div>
<div class="a" style="left:988px;top:300px;width:908px;height:500px;border:1px solid #cbcbcb"></div>
<div class="a" style="left:996px;top:296px;width:46px;height:8px;background:#f5f5f5"></div>
<div class="t" style="left:1000px;top:294px;font-size:11px;letter-spacing:-0.287px">Amount</div>
<div class="t" style="left:991.6px;top:317px;font-size:11px;letter-spacing:-0.096px">Formula type:</div>
<div class="a" style="left:1067px;top:312px;width:825px;height:20px;background:#ffffff;border:1px solid #b9b9b9"></div>
<div class="a" style="left:1875px;top:312px;width:17px;height:20px;background:#ececec;border:1px solid #b9b9b9"></div>
<svg style="left:1879.0px;top:319.0px" width="9" height="6" viewBox="0 0 9 6"><path d="M0.9 0.9L4.5 4.6L8.1 0.9" fill="none" stroke="#6b6b6b" stroke-width="1.9"/></svg>
<div class="t" style="left:1070.7px;top:317px;font-size:11px;letter-spacing:-0.138px">Constant (a single numeric value)</div>
<div class="a" style="left:992px;top:339px;width:900px;height:457px;border:1px solid #d2d2d2"></div>
<div class="t" style="left:1005.7px;top:370px;font-size:11px;letter-spacing:-0.179px">Value:</div>
<div class="a" style="left:1040px;top:365px;width:416px;height:20px;background:#fff;border:1px solid #b9b9b9"></div>
<div class="t" style="left:1043.5px;top:370px;font-size:11px;letter-spacing:0px">0</div>
<div class="a" style="left:1462px;top:365px;width:416px;height:20px;background:#ffffff;border:1px solid #b9b9b9"></div>
<div class="a" style="left:1861px;top:365px;width:17px;height:20px;background:#ececec;border:1px solid #b9b9b9"></div>
<svg style="left:1865.0px;top:372.0px" width="9" height="6" viewBox="0 0 9 6"><path d="M0.9 0.9L4.5 4.6L8.1 0.9" fill="none" stroke="#6b6b6b" stroke-width="1.9"/></svg>
<div class="t" style="left:1465.7px;top:370px;font-size:11px;letter-spacing:-0.016px">µmol</div>
<div class="t" style="left:987.5px;top:806px;font-size:11px;letter-spacing:-0.246px">Used Calculation Methods</div>
<div class="a" style="left:988px;top:820px;width:908px;height:136px;background:#ffffff;border:1px solid #c6c6c6"></div>
<div class="a" style="left:989px;top:821px;width:906px;height:20px;background:#f5f5f5"></div>
<div class="a" style="left:989px;top:840px;width:906px;height:1px;background:#d4d4d4"></div>
<div class="a" style="left:1007px;top:821px;width:1px;height:104px;background:#d4d4d4"></div>
<div class="a" style="left:989px;top:841px;width:18px;height:84px;background:#f5f5f5"></div>
<div class="a" style="left:1008px;top:841px;width:887px;height:20px;background:#e5f1fb"></div>
<div class="a" style="left:1008px;top:862px;width:442px;height:20px;background:#f0f0f0"></div>
<div class="a" style="left:1008px;top:883px;width:442px;height:20px;background:#f0f0f0"></div>
<div class="a" style="left:1008px;top:904px;width:442px;height:20px;background:#f0f0f0"></div>
<div class="a" style="left:1008px;top:861px;width:887px;height:1px;background:#dcdcdc"></div>
<div class="a" style="left:1008px;top:882px;width:887px;height:1px;background:#dcdcdc"></div>
<div class="a" style="left:1008px;top:903px;width:887px;height:1px;background:#dcdcdc"></div>
<div class="a" style="left:1008px;top:924px;width:887px;height:1px;background:#dcdcdc"></div>
<div class="a" style="left:1450px;top:821px;width:1px;height:104px;background:#d4d4d4"></div>
<div class="t" style="left:1011.5px;top:825px;font-size:11px;letter-spacing:0.007px">Category</div>
<div class="t" style="left:1454.5px;top:825px;font-size:11px;letter-spacing:-0.204px">Calculation method</div>
<div class="t" style="left:1011.5px;top:846px;font-size:11px;letter-spacing:-0.191px">DistributionCellular</div>
<div class="t" style="left:1454.5px;top:846px;font-size:11px;letter-spacing:-0.14px">Cellular partition coefficient method - PK-Sim Standard</div>
<div class="t" style="left:1011.5px;top:867px;font-size:11px;letter-spacing:-0.068px">DiffusionIntCell</div>
<div class="t" style="left:1454.5px;top:867px;font-size:11px;letter-spacing:-0.249px">Cellular permeability - PK-Sim Standard</div>
<div class="t" style="left:1011.5px;top:888px;font-size:11px;letter-spacing:0.025px">DistributionInterstitial</div>
<div class="t" style="left:1454.5px;top:888px;font-size:11px;letter-spacing:0.027px">Interstitial partition coefficient method - Schmitt</div>
<div class="t" style="left:1011.5px;top:909px;font-size:11px;letter-spacing:-0.085px">IntestinalPermeability</div>
<div class="t" style="left:1454.5px;top:909px;font-size:11px;letter-spacing:-0.271px">IntestinalPermeability_PKSim</div>
<div class="t" style="left:987.5px;top:965px;font-size:11px;letter-spacing:-0.157px">Description:</div>
<div class="a" style="left:1050px;top:960px;width:846px;height:20px;background:#ffffff;border:1px solid #b9b9b9"></div>
<div class="a" style="left:1879px;top:960px;width:17px;height:20px;background:#ececec;border:1px solid #b9b9b9"></div>
<svg style="left:1883.0px;top:967.0px" width="9" height="6" viewBox="0 0 9 6"><path d="M0.9 0.9L4.5 4.6L8.1 0.9" fill="none" stroke="#6b6b6b" stroke-width="1.9"/></svg>
<div class="a" style="left:655px;top:283px;width:297px;height:244px;box-shadow:2px 3px 6px rgba(0,0,0,0.12)"></div>
<div class="a" style="left:655px;top:283px;width:297px;height:244px;background:#fdfdfd;border:1px solid #a0a0a0"></div>
<div class="a" style="left:657px;top:309px;width:293px;height:24px;background:#cde4f7;border:1px solid #7db3e8"></div>
<div class="t" style="left:690.3px;top:291px;font-size:12px;letter-spacing:-0.327px;color:#333">Edit...</div>
<div class="t" style="left:690.3px;top:315px;font-size:12px;letter-spacing:-0.451px;color:#333">Rename...</div>
<div class="t" style="left:690.3px;top:339px;font-size:12px;letter-spacing:-0.126px;color:#333">Create Transporter Molecule...</div>
<div class="t" style="left:690.3px;top:363px;font-size:12px;letter-spacing:-0.073px;color:#333">Load Transporter Molecule...</div>
<div class="t" style="left:690.3px;top:387px;font-size:12px;letter-spacing:0.017px;color:#333">Load Transporter Molecule from Template...</div>
<div class="t" style="left:690.3px;top:411px;font-size:12px;letter-spacing:-0.077px;color:#333">Create Interaction Container...</div>
<div class="t" style="left:690.3px;top:435px;font-size:12px;letter-spacing:-0.048px;color:#333">Load Interaction Container...</div>
<div class="t" style="left:690.3px;top:459px;font-size:12px;letter-spacing:0.026px;color:#333">Load Interaction Container from Template...</div>
<div class="t" style="left:690.3px;top:483px;font-size:12px;letter-spacing:-0.516px;color:#333">Save As PKML...</div>
<div class="t" style="left:690.3px;top:507px;font-size:12px;letter-spacing:-0.389px;color:#333">Delete...</div>
<svg style="left:661px;top:289px" width="18" height="18" viewBox="0 0 18 18"><rect x="2" y="1" width="10" height="14" rx="1" fill="none" stroke="#1aa8ec" stroke-width="1.3"/><circle cx="12" cy="12" r="4.7" fill="#f08a00"/><path d="M9.8 14.3L14.2 9.8" stroke="#f7c9a0" stroke-width="1.8"/></svg>
<svg style="left:661px;top:313px" width="18" height="18" viewBox="0 0 18 18"><rect x="1.3" y="6" width="15" height="6.2" rx="2" fill="none" stroke="#1aa8ec" stroke-width="1.5"/><rect x="2.8" y="7.5" width="5.5" height="3.2" fill="#777"/><path d="M7 3.5H11M9 3.5V14.5M7 14.5H11" stroke="#222" stroke-width="1.3"/></svg>
<svg style="left:661px;top:337px" width="18" height="18" viewBox="0 0 18 18"><circle cx="9" cy="9" r="7.2" fill="#f08a00"/><path d="M9 5V13M5 9H13" stroke="#fff" stroke-width="2.4"/></svg>
<svg style="left:661px;top:361px" width="18" height="18" viewBox="0 0 18 18"><rect x="1.5" y="1" width="11" height="14" fill="#fff" stroke="#8c8c8c" stroke-width="1"/><text x="2.5" y="5.5" font-size="3.6" fill="#888" font-family="Liberation Sans">PKML</text><circle cx="12.2" cy="12.2" r="4.6" fill="#fff" stroke="#f08a00" stroke-width="2"/><path d="M10.6 12.5L12.2 10.7L13.8 12.5" fill="none" stroke="#f08a00" stroke-width="1.3"/></svg>
<svg style="left:661px;top:385px" width="18" height="18" viewBox="0 0 18 18"><circle cx="9" cy="9" r="7.2" fill="#f08a00"/><path d="M7.2 4.6H10.8V8.4H13L9 12.8L5 8.4H7.2Z" fill="#fff"/></svg>
<svg style="left:661px;top:409px" width="18" height="18" viewBox="0 0 18 18"><circle cx="9" cy="9" r="7.2" fill="#f08a00"/><path d="M9 5V13M5 9H13" stroke="#fff" stroke-width="2.4"/></svg>
<svg style="left:661px;top:433px" width="18" height="18" viewBox="0 0 18 18"><rect x="1.5" y="1" width="11" height="14" fill="#fff" stroke="#8c8c8c" stroke-width="1"/><text x="2.5" y="5.5" font-size="3.6" fill="#888" font-family="Liberation Sans">PKML</text><circle cx="12.2" cy="12.2" r="4.6" fill="#fff" stroke="#f08a00" stroke-width="2"/><path d="M10.6 12.5L12.2 10.7L13.8 12.5" fill="none" stroke="#f08a00" stroke-width="1.3"/></svg>
<svg style="left:661px;top:457px" width="18" height="18" viewBox="0 0 18 18"><circle cx="9" cy="9" r="7.2" fill="#f08a00"/><path d="M7.2 4.6H10.8V8.4H13L9 12.8L5 8.4H7.2Z" fill="#fff"/></svg>
<svg style="left:661px;top:481px" width="18" height="18" viewBox="0 0 18 18"><use href="#molsmall" x="-1" y="-2" width="14" height="14"/><circle cx="12.3" cy="12.5" r="4.4" fill="#fff" stroke="#f08a00" stroke-width="2"/><path d="M10.6 12.8L12.3 11L14 12.8" fill="none" stroke="#f08a00" stroke-width="1.3"/></svg>
<svg style="left:661px;top:505px" width="18" height="18" viewBox="0 0 18 18"><rect x="3" y="2.2" width="12" height="1.8" fill="#8a8a8a"/><rect x="7" y="0.8" width="4" height="1.6" fill="#8a8a8a"/><path d="M4 5H14L13.3 16.5H4.7Z" fill="#9a9a9a"/><path d="M6.8 6.5V15M9 6.5V15M11.2 6.5V15" stroke="#e8e8e8" stroke-width="1"/></svg>
<div class="a" style="left:0px;top:1004px;width:1920px;height:28px;background:#1b4789"></div>
<div class="t" style="left:156px;top:1013px;font-size:11px;letter-spacing:-0.099px;color:#ffffff">Project: double tmdd demo</div>
<div class="t" style="left:297px;top:1013px;font-size:11px;letter-spacing:-0.197px;color:#ffffff">C:\Projects\S_Sanofi_P25-050_FcRn-target-TMDD-platform-model-HTPBPK-\Models\TMDD\Demo files\double tmdd demo.mbp3</div>
<div class="t" style="left:917px;top:1013px;font-size:11px;letter-spacing:-0.165px;color:#ffffff">Amount based reactions</div>
<div class="t" style="left:1836px;top:1013px;font-size:11px;letter-spacing:-0.16px;color:#ffffff">12.1 - Build 227</div>
<div class="a" style="left:0px;top:1032px;width:1920px;height:48px;background:#eeeeee"></div>
<svg style="left:19px;top:1040px" width="30" height="32" viewBox="0 0 30 32"><path d="M3 14C3 11 5 10 8 10H19C22 10 23 12 23 14V22C23 25 21 26 19 26H10L5 29L6 26C4 25 3 24 3 22Z" fill="#2a7fd4"/><path d="M5 12C5 10 7 9 9 9H20C23 9 24 11 24 13V20C24 23 22 24 20 24H9C7 24 5 23 5 20Z" fill="#38a8f0"/><circle cx="10" cy="16.5" r="3" fill="#fff"/><path d="M15 15.5H21M15 18.5H20" stroke="#fff" stroke-width="1.6"/><circle cx="20" cy="7.5" r="7" fill="#c42b1c"/><text x="20" y="11" font-size="10" fill="#fff" text-anchor="middle" font-family="Liberation Sans">3</text></svg>
<svg style="left:489px;top:1048px" width="16" height="16" viewBox="0 0 16 16"><defs><linearGradient id="wl" x1="0" y1="0" x2="1" y2="1"><stop offset="0" stop-color="#2fb4f4"/><stop offset="1" stop-color="#0a6fd0"/></linearGradient></defs><rect x="0" y="0" width="7.5" height="7.5" fill="url(#wl)"/><rect x="8.5" y="0" width="7.5" height="7.5" fill="url(#wl)"/><rect x="0" y="8.5" width="7.5" height="7.5" fill="url(#wl)"/><rect x="8.5" y="8.5" width="7.5" height="7.5" fill="url(#wl)"/></svg>
<div class="a" style="left:515px;top:1040px;width:218px;height:31px;background:#fafafa;border:1px solid #dcdcdc;border-radius:16px"></div>
<svg style="left:526px;top:1049px" width="15" height="15" viewBox="0 0 15 15"><circle cx="6" cy="6" r="4.8" fill="none" stroke="#1a1a1a" stroke-width="1.6"/><path d="M9.5 9.5L13.8 13.8" stroke="#1a1a1a" stroke-width="1.8"/></svg>
<div class="t" style="left:551px;top:1050px;font-size:14px;letter-spacing:-1.06px;color:#5a5a5a">Search</div>
<svg style="left:742px;top:1047px" width="18" height="18" viewBox="0 0 18 18"><rect x="0" y="6" width="10" height="10" fill="#1a1a1a"/><rect x="5" y="2" width="10" height="10" fill="#cfcfcf"/><rect x="5" y="6" width="5" height="6" fill="#888"/></svg>
<svg style="left:774px;top:1047px" width="18" height="18" viewBox="0 0 18 18"><defs><linearGradient id="cpa" x1="0" y1="0" x2="1" y2="1"><stop offset="0" stop-color="#2fc4f0"/><stop offset="0.5" stop-color="#7b6cf6"/><stop offset="1" stop-color="#f45fa5"/></linearGradient></defs><path d="M5 2H11C12.5 2 13 3 13.3 4L15.5 11C16 12.5 17 13 17 14.5C17 16 16 16.5 14.5 16.5H8.5C7 16.5 6.5 15.5 6.2 14.5L4 7.5C3.5 6 2 5.5 2 4C2 2.8 3 2 5 2Z" fill="url(#cpa)"/><path d="M4 13.5C5 11 6 9 8 9H10" fill="none" stroke="#f8a33a" stroke-width="2.2"/><path d="M14 5C13 7.5 12 9.5 10 9.5H8" fill="none" stroke="#34c3ef" stroke-width="2.2"/></svg>
<svg style="left:807px;top:1047px" width="18" height="18" viewBox="0 0 18 18"><path d="M1 3H7L8.5 4.5H17V16H1Z" fill="#f5c036"/><rect x="1" y="6" width="16" height="10" fill="#fcd75a"/><rect x="4" y="11" width="10" height="3" rx="1" fill="#1b8de0"/></svg>
<svg style="left:839px;top:1047px" width="18" height="18" viewBox="0 0 18 18"><defs><linearGradient id="edg" x1="0" y1="0" x2="1" y2="1"><stop offset="0" stop-color="#3fd08a"/><stop offset="1" stop-color="#1479d4"/></linearGradient></defs><circle cx="10" cy="8.5" r="7.5" fill="url(#edg)"/><path d="M4 10C4 6 7.5 4 10.5 4.5C14 5 15.5 7.5 14.5 9.5C13.5 11 11 11 9.5 10" fill="none" stroke="#fff" stroke-width="1.3" opacity="0.8"/><rect x="1" y="10.5" width="8" height="6.5" rx="1" fill="#c66b1e"/><rect x="3.5" y="9" width="3" height="2.2" fill="none" stroke="#7a3f10" stroke-width="1"/></svg>
<svg style="left:871px;top:1047px" width="18" height="18" viewBox="0 0 18 18"><path d="M3 5H15L16 17H2Z" fill="#1f4e8c"/><path d="M6 5C6 2 12 2 12 5" fill="none" stroke="#4aa3f0" stroke-width="1.5"/><rect x="5.5" y="7.5" width="3" height="3" fill="#f25022"/><rect x="9.5" y="7.5" width="3" height="3" fill="#7fba00"/><rect x="5.5" y="11.5" width="3" height="3" fill="#00a4ef"/><rect x="9.5" y="11.5" width="3" height="3" fill="#ffb900"/></svg>
<svg style="left:903px;top:1047px" width="18" height="18" viewBox="0 0 18 18"><rect x="1" y="1" width="16" height="16" fill="#0a76c8"/><circle cx="9" cy="9" r="5.5" fill="none" stroke="#9fd0f5" stroke-width="1"/><text x="9" y="10.3" font-size="3.8" fill="#fff" text-anchor="middle" font-family="Liberation Sans">DELL</text></svg>
<svg style="left:934px;top:1047px" width="18" height="18" viewBox="0 0 18 18"><rect x="6" y="3" width="11" height="12" rx="1" fill="#35b5f5"/><path d="M6 7L11.5 11L17 7V15H6Z" fill="#1a8de0"/><rect x="1" y="5" width="9" height="10" rx="1.5" fill="#0f5fc2"/><circle cx="5.5" cy="10" r="2.5" fill="none" stroke="#fff" stroke-width="1.5"/><circle cx="16" cy="1.5" r="1.5" fill="#1674d8"/></svg>
<svg style="left:966px;top:1047px" width="18" height="18" viewBox="0 0 18 18"><path d="M1 10L6 15L16 4" fill="none" stroke="#3d8fe6" stroke-width="3.5"/><path d="M1 10L6 15" stroke="#1f5fb8" stroke-width="3.5"/><circle cx="16" cy="1.5" r="1.5" fill="#1674d8"/></svg>
<svg style="left:999px;top:1047px" width="18" height="18" viewBox="0 0 18 18"><circle cx="8" cy="4" r="2.5" fill="#7b83eb"/><circle cx="14" cy="6" r="2" fill="#5059c9"/><rect x="10" y="8" width="7" height="9" rx="3" fill="#5059c9"/><rect x="4" y="7" width="9" height="10" rx="2" fill="#7b83eb"/><rect x="1" y="8" width="8" height="8" rx="1" fill="#4b53bc"/><path d="M3 10H7M5 10V14.5" stroke="#fff" stroke-width="1.4"/><circle cx="16" cy="1.5" r="1.5" fill="#1674d8"/></svg>
<svg style="left:1031px;top:1047px" width="18" height="18" viewBox="0 0 18 18"><rect x="1" y="1" width="16" height="16" fill="#fff"/><rect x="2" y="2" width="14" height="14" rx="2" fill="#1ea1f1"/><rect x="2" y="2" width="14" height="3.5" rx="1" fill="#0f6fc4"/><g fill="#bfe4fb"><rect x="4" y="8" width="2" height="2"/><rect x="8" y="8" width="2" height="2"/><rect x="12" y="8" width="2" height="2"/><rect x="4" y="12" width="2" height="2"/><rect x="8" y="12" width="2" height="2"/></g></svg>
<svg style="left:1063px;top:1047px" width="18" height="18" viewBox="0 0 18 18"><circle cx="9" cy="9" r="8" fill="#1ed760"/><path d="M4.5 6.5C8 5.5 11 6 13.8 7.3M5 9.3C8 8.5 10.5 9 12.8 10M5.5 12C8 11.3 10 11.7 12 12.5" fill="none" stroke="#111" stroke-width="1.4" stroke-linecap="round"/></svg>
<svg style="left:1095px;top:1047px" width="18" height="18" viewBox="0 0 18 18"><circle cx="9" cy="9" r="8" fill="#db4437"/><path d="M9 9L17 9A8 8 0 0 1 5 15.9Z" fill="#f4c20d"/><path d="M9 9L5 15.9A8 8 0 0 1 2.1 5Z" fill="#0f9d58"/><circle cx="9" cy="9" r="3.8" fill="#fff"/><circle cx="9" cy="9" r="3" fill="#4285f4"/></svg>
<svg style="left:1127px;top:1047px" width="18" height="18" viewBox="0 0 18 18"><rect x="5" y="1" width="12" height="16" rx="1" fill="#41a5ee"/><rect x="5" y="6" width="12" height="6" fill="#2b7cd3"/><rect x="5" y="12" width="12" height="5" fill="#185abd"/><rect x="1" y="5" width="9" height="9" rx="1" fill="#185abd"/><text x="5.5" y="12.3" font-size="7" fill="#fff" text-anchor="middle" font-weight="bold" font-family="Liberation Sans">W</text></svg>
<svg style="left:1159px;top:1047px" width="18" height="18" viewBox="0 0 18 18"><circle cx="10" cy="9" r="8" fill="#ed6c47"/><path d="M10 1A8 8 0 0 1 18 9H10Z" fill="#ff8f6b"/><path d="M10 9H18A8 8 0 0 1 10 17Z" fill="#d35230"/><rect x="1" y="5" width="9" height="9" rx="1" fill="#c43e1c"/><text x="5.5" y="12.3" font-size="7" fill="#fff" text-anchor="middle" font-weight="bold" font-family="Liberation Sans">P</text></svg>
<svg style="left:1190px;top:1047px" width="18" height="18" viewBox="0 0 18 18"><rect x="2" y="1.5" width="14" height="14" rx="1.5" fill="#2b8fe0"/><rect x="2" y="9.5" width="14" height="6" fill="#1f74c4"/><path d="M5.5 5L12.5 13M10 3.5L14 9.5M4 11.5H11" stroke="#fff" stroke-width="1.6" opacity="0.9"/><circle cx="5.5" cy="5" r="1.6" fill="#e8702a"/><circle cx="4.8" cy="11.3" r="1.1" fill="#8dd04a"/><circle cx="9.5" cy="15.3" r="1.4" fill="#6cc020"/><circle cx="14.5" cy="15" r="1.2" fill="#3a4fa0"/></svg>
<svg style="left:1223px;top:1047px" width="18" height="18" viewBox="0 0 18 18"><circle cx="9" cy="9" r="7.5" fill="none" stroke="#25a244" stroke-width="2"/><path d="M2 16.5L3 12.5" stroke="#25a244" stroke-width="2"/><path d="M6 6C6 10 9 12.5 12 12.5L13 11L11.5 10L10.5 10.8C9 10 8 9 7.3 7.5L8 6.5L7 5Z" fill="#25a244"/></svg>
<svg style="left:1255px;top:1047px" width="18" height="18" viewBox="0 0 18 18"><rect x="5" y="1" width="12" height="16" rx="1" fill="#33c481"/><rect x="5" y="6" width="12" height="6" fill="#21a366"/><rect x="5" y="12" width="12" height="5" fill="#107c41"/><rect x="1" y="5" width="9" height="9" rx="1" fill="#107c41"/><text x="5.5" y="12.3" font-size="7" fill="#fff" text-anchor="middle" font-weight="bold" font-family="Liberation Sans">x</text></svg>
<svg style="left:1287px;top:1047px" width="18" height="18" viewBox="0 0 18 18"><rect x="1" y="1" width="16" height="16" rx="2" fill="#e01e1e"/><path d="M4 13C7 9 8 5 9 3C10 6 11 9 14.5 11C10 11 7 12 4 13Z" fill="none" stroke="#fff" stroke-width="1.3"/></svg>
<div class="a" style="left:1315px;top:1037px;width:26px;height:38px;background:#f7f7f7;border:1px solid #e2e2e2;border-radius:5px"></div>
<svg style="left:1319px;top:1047px" width="18" height="18" viewBox="0 0 18 18"><rect x="2" y="1.5" width="14" height="14" rx="1.5" fill="#2b8fe0"/><rect x="2" y="9.5" width="14" height="6" fill="#1f74c4"/><path d="M5.5 5L12.5 13M10 3.5L14 9.5M4 11.5H11" stroke="#fff" stroke-width="1.6" opacity="0.9"/><circle cx="5.5" cy="5" r="1.6" fill="#e8702a"/><circle cx="4.8" cy="11.3" r="1.1" fill="#8dd04a"/><circle cx="9.5" cy="15.3" r="1.4" fill="#6cc020"/><circle cx="14.5" cy="15" r="1.2" fill="#3a4fa0"/></svg>
<div class="a" style="left:1322px;top:1072px;width:13px;height:3px;background:#0a64c8;border-radius:2px"></div>
<svg style="left:1351px;top:1047px" width="18" height="18" viewBox="0 0 18 18"><rect x="1" y="1" width="16" height="16" rx="2" fill="#5cb847"/><path d="M1 1H17V10C11 10 6 6 4 1Z" fill="#12a6ea"/><path d="M4 1H6.5C8 5 11 8.5 17 8.7V10.5C11 10.5 6 6 4 1Z" fill="#8fd4f5"/></svg>
<svg style="left:1383px;top:1047px" width="18" height="18" viewBox="0 0 18 18"><rect x="3" y="1" width="12" height="16" rx="1.5" fill="#6a7280"/><rect x="5" y="3" width="8" height="3" fill="#cfd6de"/><g fill="#e8ecf0"><rect x="5" y="8" width="2" height="2"/><rect x="8" y="8" width="2" height="2"/><rect x="11" y="8" width="2" height="2"/><rect x="5" y="11" width="2" height="2"/><rect x="8" y="11" width="2" height="2"/><rect x="11" y="11" width="2" height="2"/><rect x="5" y="14" width="2" height="2"/><rect x="8" y="14" width="2" height="2"/><rect x="11" y="14" width="2" height="2"/></g></svg>
<svg style="left:1415px;top:1047px" width="18" height="18" viewBox="0 0 18 18"><rect x="1" y="1" width="16" height="16" rx="3" fill="#5b2bb5"/><circle cx="9" cy="9" r="5" fill="none" stroke="#fff" stroke-width="1.6"/><path d="M7 7L12 12" stroke="#fff" stroke-width="1.6"/></svg>
<div class="a" style="left:814.5px;top:1072px;width:3px;height:3px;background:#8a8a8a;border-radius:50%"></div>
<div class="a" style="left:846.5px;top:1072px;width:3px;height:3px;background:#8a8a8a;border-radius:50%"></div>
<div class="a" style="left:942.5px;top:1072px;width:3px;height:3px;background:#8a8a8a;border-radius:50%"></div>
<div class="a" style="left:1006.5px;top:1072px;width:3px;height:3px;background:#8a8a8a;border-radius:50%"></div>
<div class="a" style="left:1070.5px;top:1072px;width:3px;height:3px;background:#8a8a8a;border-radius:50%"></div>
<div class="a" style="left:1102.5px;top:1072px;width:3px;height:3px;background:#8a8a8a;border-radius:50%"></div>
<div class="a" style="left:1134.5px;top:1072px;width:3px;height:3px;background:#8a8a8a;border-radius:50%"></div>
<div class="a" style="left:1166.5px;top:1072px;width:3px;height:3px;background:#8a8a8a;border-radius:50%"></div>
<div class="a" style="left:1197.5px;top:1072px;width:3px;height:3px;background:#8a8a8a;border-radius:50%"></div>
<div class="a" style="left:1230.5px;top:1072px;width:3px;height:3px;background:#8a8a8a;border-radius:50%"></div>
<div class="a" style="left:1262.5px;top:1072px;width:3px;height:3px;background:#8a8a8a;border-radius:50%"></div>
<div class="a" style="left:1294.5px;top:1072px;width:3px;height:3px;background:#8a8a8a;border-radius:50%"></div>
<div class="a" style="left:1358.5px;top:1072px;width:3px;height:3px;background:#8a8a8a;border-radius:50%"></div>
<div class="a" style="left:1390.5px;top:1072px;width:3px;height:3px;background:#8a8a8a;border-radius:50%"></div>
<div class="a" style="left:1421.5px;top:1072px;width:3px;height:3px;background:#8a8a8a;border-radius:50%"></div>
<svg style="left:1619px;top:1052px" width="12" height="7" viewBox="0 0 12 7"><path d="M1 6L6 1L11 6" fill="none" stroke="#222" stroke-width="1.5"/></svg>
<svg style="left:1648px;top:1049px" width="19" height="13" viewBox="0 0 19 13"><path d="M4 12C1.5 12 0.5 10 0.5 8.5C0.5 6.5 2 5 4 5C5 2 7.5 0.5 10 0.5C13.5 0.5 15.5 3 16 5.5C17.8 6 18.5 7.5 18.5 9C18.5 11 17 12 15 12Z" fill="#1a8fe0"/><path d="M8 12C6 12 5 10.5 5 9C5 7.5 6.3 6.2 8 6.3C9 4 11 3 13 3.5C15.5 4 17 6 17 8C18.5 8.5 18.5 12 16 12Z" fill="#3aaef5"/></svg>
<svg style="left:1684px;top:1047px" width="10" height="18" viewBox="0 0 10 18"><rect x="2.5" y="0.8" width="5" height="10" rx="2.5" fill="none" stroke="#1a7fd4" stroke-width="1.5"/><path d="M0.8 8C0.8 11 2.8 13 5 13C7.2 13 9.2 11 9.2 8M5 13V17" fill="none" stroke="#1a7fd4" stroke-width="1.5"/></svg>
<div class="t" style="left:1715px;top:1052px;font-size:12px;letter-spacing:-0.839px;color:#222">ENG</div>
<svg style="left:1756px;top:1049px" width="18" height="14" viewBox="0 0 18 14"><path d="M1 5C5.5 0.5 12.5 0.5 17 5M3.5 7.5C6.5 4.5 11.5 4.5 14.5 7.5M6 10C7.7 8.3 10.3 8.3 12 10" fill="none" stroke="#222" stroke-width="1.5"/><circle cx="9" cy="12.3" r="1.3" fill="#222"/></svg>
<svg style="left:1780px;top:1049px" width="16" height="14" viewBox="0 0 16 14"><path d="M1 5H4L8 1.5V12.5L4 9H1Z" fill="none" stroke="#222" stroke-width="1.3"/><path d="M10.5 4.5C11.5 5.5 11.5 8.5 10.5 9.5M12.8 2.5C14.8 4.5 14.8 9.5 12.8 11.5" fill="none" stroke="#222" stroke-width="1.2"/></svg>
<svg style="left:1803px;top:1048px" width="18" height="15" viewBox="0 0 18 15"><rect x="2" y="3.5" width="13" height="8" rx="1.5" fill="none" stroke="#222" stroke-width="1.3"/><rect x="15.3" y="6" width="1.8" height="3" fill="#222"/><path d="M7 1L4.5 7.5H8L6 14" fill="none" stroke="#222" stroke-width="1.4"/><rect x="3.5" y="5" width="3" height="5" fill="#222"/></svg>
<div class="t" style="left:1872.6px;top:1042px;font-size:12px;letter-spacing:-0.306px;color:#1a1a1a">13:45</div>
<div class="t" style="left:1839.8px;top:1058px;font-size:12px;letter-spacing:0.144px;color:#1a1a1a">19/12/2025</div>
</body></html>
